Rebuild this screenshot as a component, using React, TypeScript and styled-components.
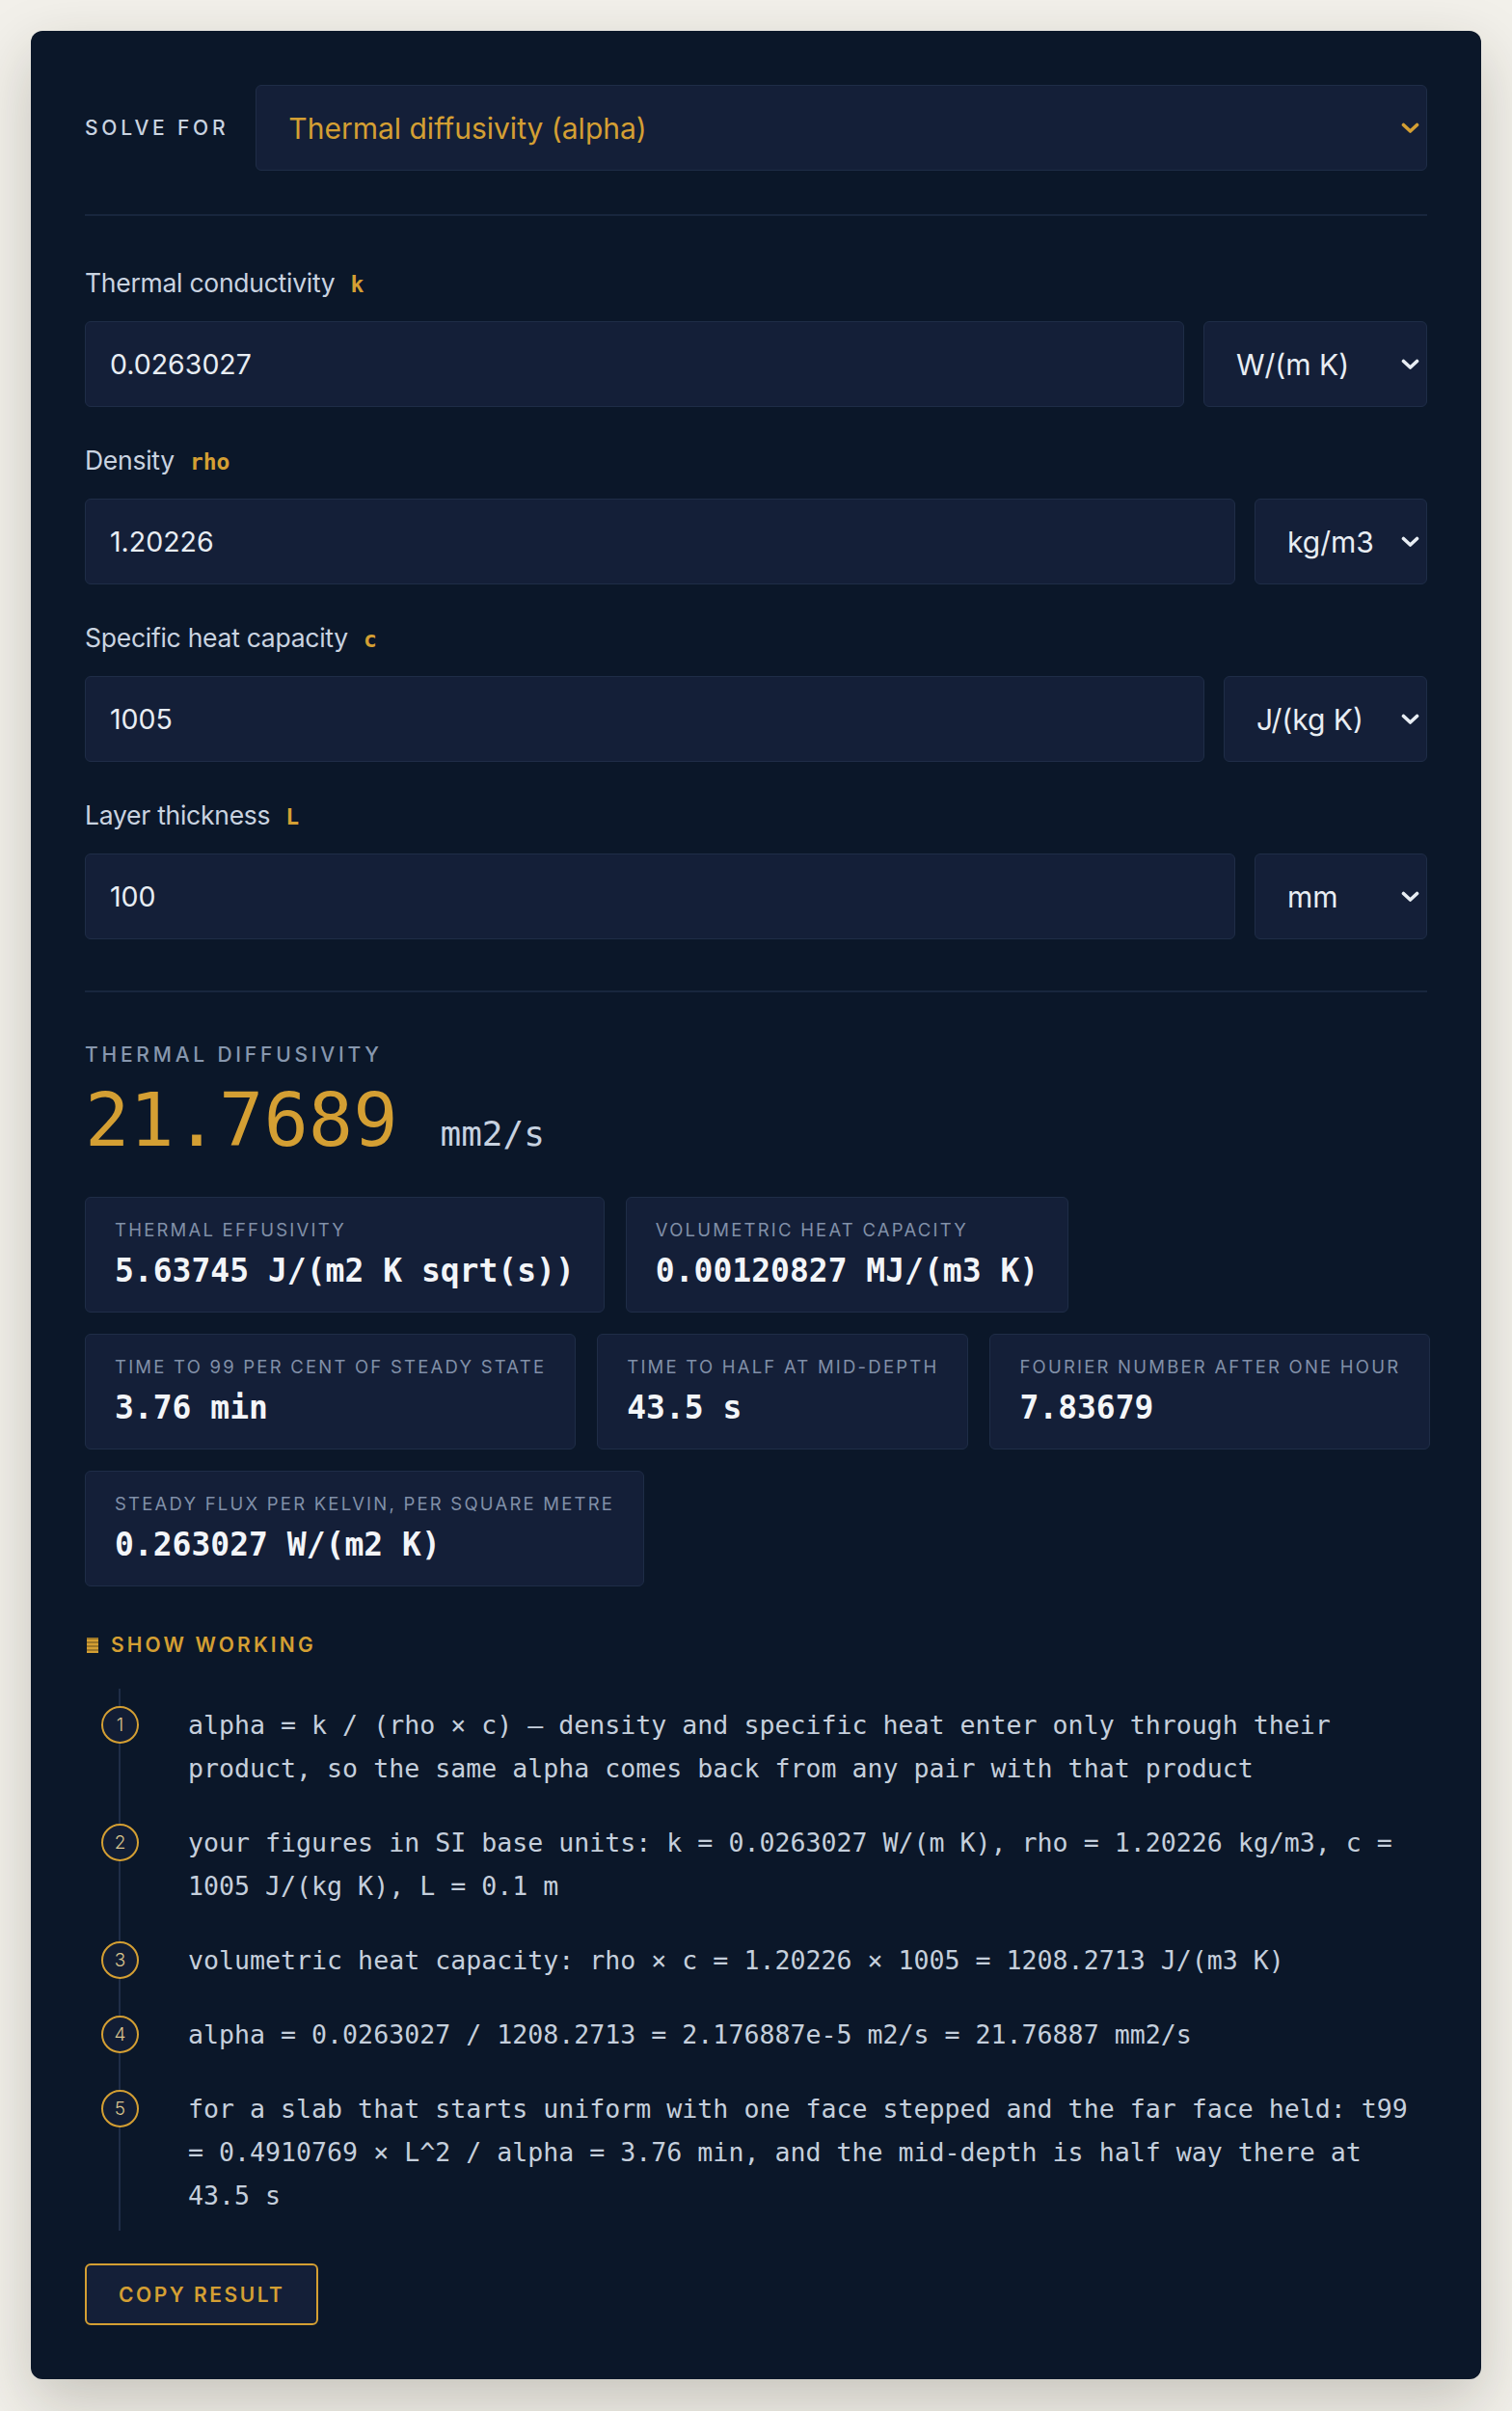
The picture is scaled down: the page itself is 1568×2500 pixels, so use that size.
import React from 'react';
import styled, { createGlobalStyle } from 'styled-components';

const SANS = `Inter, "Noto Sans", "Liberation Sans", sans-serif`;
const MONO = `"DejaVu Sans Mono", "Liberation Mono", monospace`;
const GOLD = '#d49f33';
const FIELD_BG = '#141f38';
const FIELD_BORDER = '#1f2d47';
const TEXT = '#e8edf3';

const GlobalStyle = createGlobalStyle`
  html, body {
    margin: 0;
    padding: 0;
    background: #f2f0ea;
  }
  body {
    font-family: ${SANS};
  }
  * {
    box-sizing: border-box;
  }
`;

const fields = [
  { label: 'Thermal conductivity', symbol: 'k', value: '0.0263027', units: ['W/(m K)', 'BTU/(h ft F)'], width: 232 },
  { label: 'Density', symbol: 'rho', value: '1.20226', units: ['kg/m3', 'g/cm3'], width: 179 },
  { label: 'Specific heat capacity', symbol: 'c', value: '1005', units: ['J/(kg K)', 'kJ/(kg K)'], width: 211 },
  { label: 'Layer thickness', symbol: 'L', value: '100', units: ['mm', 'cm', 'm'], width: 179 },
];

const statRows = [
  [
    { label: 'Thermal effusivity', value: '5.63745 J/(m2 K sqrt(s))' },
    { label: 'Volumetric heat capacity', value: '0.00120827 MJ/(m3 K)' },
  ],
  [
    { label: 'Time to 99 per cent of steady state', value: '3.76 min' },
    { label: 'Time to half at mid-depth', value: '43.5 s' },
    { label: 'Fourier number after one hour', value: '7.83679' },
  ],
  [{ label: 'Steady flux per kelvin, per square metre', value: '0.263027 W/(m2 K)' }],
];

const steps = [
  'alpha = k / (rho × c) — density and specific heat enter only through their product, so the same alpha comes back from any pair with that product',
  'your figures in SI base units: k = 0.0263027 W/(m K), rho = 1.20226 kg/m3, c = 1005 J/(kg K), L = 0.1 m',
  'volumetric heat capacity: rho × c = 1.20226 × 1005 = 1208.2713 J/(m3 K)',
  'alpha = 0.0263027 / 1208.2713 = 2.176887e-5 m2/s = 21.76887 mm2/s',
  'for a slab that starts uniform with one face stepped and the far face held: t99 = 0.4910769 × L^2 / alpha = 3.76 min, and the mid-depth is half way there at 43.5 s',
];

function Chevron({ color }: { color: string }) {
  return (
    <ChevronIcon width="19" height="12" viewBox="0 0 19 12" fill="none">
      <path d="M2.5 2.5 L9.5 9 L16.5 2.5" stroke={color} strokeWidth="3.6" strokeLinecap="round" strokeLinejoin="round" />
    </ChevronIcon>
  );
}

export default function App() {
  return (
    <Page>
      <GlobalStyle />
      <Card>
        <SolveRow>
          <Eyebrow>Solve for</Eyebrow>
          <SelectWrap>
            <Select $accent defaultValue="alpha">
              <option value="alpha">Thermal diffusivity (alpha)</option>
              <option value="k">Thermal conductivity (k)</option>
              <option value="rho">Density (rho)</option>
              <option value="c">Specific heat capacity (c)</option>
            </Select>
            <Chevron color={GOLD} />
          </SelectWrap>
        </SolveRow>

        <Divider $top={45} $bottom={53} />

        <Fields>
          {fields.map((f) => (
            <Field key={f.symbol}>
              <FieldLabel>
                {f.label}
                <Symbol>{f.symbol}</Symbol>
              </FieldLabel>
              <InputRow>
                <NumberInput defaultValue={f.value} />
                <SelectWrap $width={f.width}>
                  <Select defaultValue={f.units[0]}>
                    {f.units.map((u) => (
                      <option key={u}>{u}</option>
                    ))}
                  </Select>
                  <Chevron color={TEXT} />
                </SelectWrap>
              </InputRow>
            </Field>
          ))}
        </Fields>

        <Divider $top={53} $bottom={51} />

        <Eyebrow $muted>Thermal diffusivity</Eyebrow>
        <Headline>
          <BigValue>21.7689</BigValue>
          <BigUnit>mm2/s</BigUnit>
        </Headline>

        <Stats>
          {statRows.map((row, i) => (
            <StatRow key={i}>
              {row.map((s) => (
                <StatCard key={s.label}>
                  <StatLabel>{s.label}</StatLabel>
                  <StatValue>{s.value}</StatValue>
                </StatCard>
              ))}
            </StatRow>
          ))}
        </Stats>

        <WorkingToggle>
          <ToggleMark />
          Show working
        </WorkingToggle>

        <Steps>
          {steps.map((s, i) => (
            <Step key={i}>
              <StepBadge>{i + 1}</StepBadge>
              {s}
            </Step>
          ))}
        </Steps>

        <CopyButton>Copy result</CopyButton>
      </Card>
    </Page>
  );
}

const Page = styled.div`
  padding: 32px;
  min-height: 2500px;
`;

const Card = styled.main`
  display: flex;
  flex-direction: column;
  background: #0b1729;
  border-radius: 12px;
  padding: 56px;
  box-shadow: 0 24px 64px rgba(40, 36, 24, 0.22);
`;

const SolveRow = styled.div`
  display: flex;
  align-items: center;
  gap: 28px;
`;

const Eyebrow = styled.span<{ $muted?: boolean }>`
  font-family: ${SANS};
  font-size: 21px;
  line-height: 28px;
  font-weight: 500;
  letter-spacing: 0.18em;
  text-transform: uppercase;
  color: ${(p) => (p.$muted ? '#8797ae' : '#c9d3e0')};
`;

const SelectWrap = styled.div<{ $width?: number }>`
  position: relative;
  display: flex;
  flex: ${(p) => (p.$width ? `0 0 ${p.$width}px` : '1 1 auto')};
  min-width: 0;
`;

const Select = styled.select<{ $accent?: boolean }>`
  appearance: none;
  width: 100%;
  height: 89px;
  padding: 0 40px 0 33px;
  background: ${FIELD_BG};
  border: 1px solid ${FIELD_BORDER};
  border-radius: 6px;
  color: ${(p) => (p.$accent ? GOLD : TEXT)};
  font-family: ${SANS};
  font-size: 30px;
  outline: none;
`;

const ChevronIcon = styled.svg`
  position: absolute;
  right: 8px;
  top: 50%;
  transform: translateY(-50%);
  pointer-events: none;
`;

const Divider = styled.hr<{ $top: number; $bottom: number }>`
  width: 100%;
  height: 2px;
  border: 0;
  background: #18263d;
  margin: ${(p) => p.$top}px 0 ${(p) => p.$bottom}px;
`;

const Fields = styled.div`
  display: flex;
  flex-direction: column;
  gap: 39px;
`;

const Field = styled.div`
  display: flex;
  flex-direction: column;
  gap: 24px;
`;

const FieldLabel = styled.label`
  display: flex;
  align-items: baseline;
  gap: 16px;
  height: 32px;
  font-family: ${SANS};
  font-size: 26.5px;
  line-height: 32px;
  letter-spacing: -0.01em;
  color: #c9d3e0;
`;

const Symbol = styled.span`
  font-family: ${MONO};
  font-weight: 700;
  font-size: 23px;
  line-height: 32px;
  letter-spacing: 0;
  color: ${GOLD};
`;

const InputRow = styled.div`
  display: flex;
  gap: 20px;
`;

const NumberInput = styled.input`
  flex: 1 1 auto;
  min-width: 0;
  height: 89px;
  padding: 0 25px;
  background: ${FIELD_BG};
  border: 1px solid ${FIELD_BORDER};
  border-radius: 6px;
  color: ${TEXT};
  font-family: ${SANS};
  font-size: 28.5px;
  outline: none;
`;

const Headline = styled.div`
  display: flex;
  align-items: baseline;
  gap: 44px;
  margin-top: 15px;
`;

const BigValue = styled.span`
  font-family: ${MONO};
  font-size: 77px;
  line-height: 77px;
  color: ${GOLD};
`;

const BigUnit = styled.span`
  font-family: ${MONO};
  font-size: 36px;
  color: #c7d2e0;
`;

const Stats = styled.div`
  display: flex;
  flex-direction: column;
  gap: 22px;
  margin-top: 41px;
`;

const StatRow = styled.div`
  display: flex;
  gap: 22px;
`;

const StatCard = styled.div`
  display: flex;
  flex-direction: column;
  gap: 8px;
  padding: 20px 30px;
  background: ${FIELD_BG};
  border: 1px solid ${FIELD_BORDER};
  border-radius: 6px;
`;

const StatLabel = styled.span`
  font-family: ${SANS};
  font-size: 18.5px;
  line-height: 26px;
  letter-spacing: 0.12em;
  text-transform: uppercase;
  color: #8190a8;
  white-space: nowrap;
`;

const StatValue = styled.span`
  font-family: ${MONO};
  font-size: 33px;
  line-height: 44px;
  font-weight: 700;
  color: #f3f5f8;
  white-space: nowrap;
`;

const WorkingToggle = styled.div`
  display: flex;
  align-items: center;
  gap: 13px;
  margin-top: 46px;
  padding-left: 2px;
  font-family: ${SANS};
  font-size: 21px;
  line-height: 30px;
  font-weight: 600;
  letter-spacing: 0.15em;
  text-transform: uppercase;
  color: ${GOLD};
`;

const ToggleMark = styled.span`
  width: 12px;
  height: 16px;
  background: repeating-linear-gradient(to bottom, #9c7628 0 2px, ${GOLD} 2px 4px);
`;

const Steps = styled.ol`
  list-style: none;
  display: flex;
  flex-direction: column;
  gap: 32px;
  margin: 30px 0 0 35px;
  padding: 15px 0 14px;
  border-left: 2px solid #1f2d47;
`;

const Step = styled.li`
  position: relative;
  padding-left: 70px;
  font-family: ${MONO};
  font-size: 26.6px;
  line-height: 45px;
  color: #c5cfdc;
`;

const StepBadge = styled.span`
  position: absolute;
  left: -20px;
  top: 3px;
  width: 39px;
  height: 39px;
  display: grid;
  place-items: center;
  border: 2px solid ${GOLD};
  border-radius: 50%;
  background: #121d34;
  font-family: ${SANS};
  font-size: 19px;
  line-height: 1;
  font-weight: 300;
  color: #d9c38e;
`;

const CopyButton = styled.button`
  align-self: flex-start;
  margin-top: 34px;
  height: 64px;
  padding: 0 33px;
  background: ${FIELD_BG};
  border: 2px solid ${GOLD};
  border-radius: 6px;
  color: ${GOLD};
  font-family: ${SANS};
  font-size: 21px;
  font-weight: 600;
  letter-spacing: 0.12em;
  text-transform: uppercase;
  cursor: pointer;
`;
